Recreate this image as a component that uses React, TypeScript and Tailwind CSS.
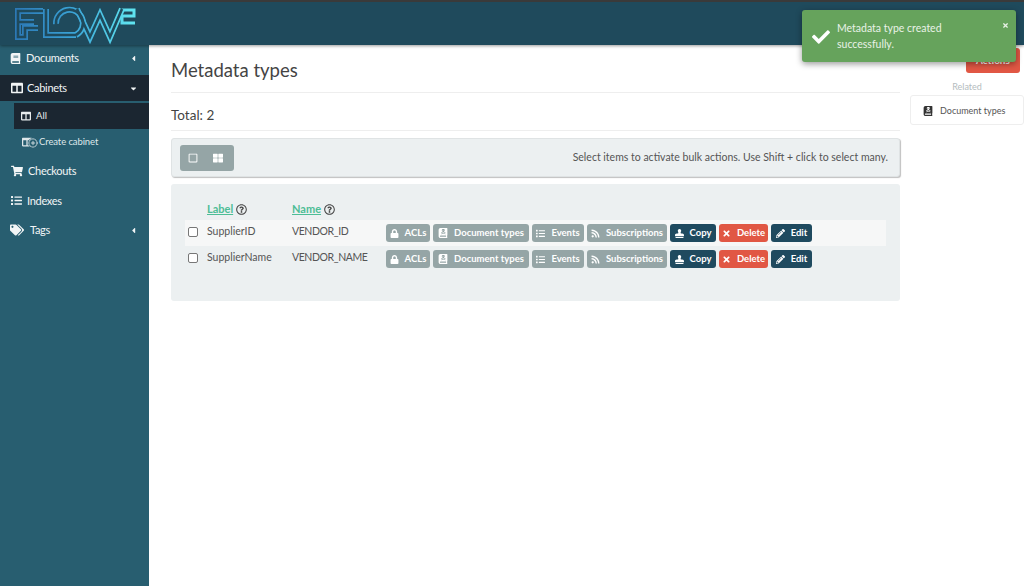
import { CirclePlus } from "lucide-react";
import {
  FaBook,
  FaBookDead,
  FaCaretDown,
  FaCaretLeft,
  FaCheck,
  FaColumns,
  FaList,
  FaLock,
  FaPencilAlt,
  FaRegQuestionCircle,
  FaRegSquare,
  FaRss,
  FaShoppingCart,
  FaStamp,
  FaTags,
  FaThLarge,
  FaTimes,
} from "react-icons/fa";

const Logo = () => {
  const paths = [
    "M43 11H18V22H34M18 22V37H25V28H38",
    "M46 9V35H76",
    "M76 35A13.5 13.5 0 1 0 56 24",
    "M77 9L90 37L100 15L110 37L122 9",
    "M122 10H134V16H122V23H135",
  ];
  return (
    <svg className="ml-[10px]" width="130" height="43" viewBox="10 2 130 43" fill="none">
      <defs>
        <linearGradient id="flow" x1="15" x2="130" y1="0" y2="0" gradientUnits="userSpaceOnUse">
          <stop offset="0" stopColor="#2c78b5" />
          <stop offset="0.5" stopColor="#3aa3d6" />
          <stop offset="1" stopColor="#5fe3f0" />
        </linearGradient>
      </defs>
      {paths.map((d, i) => (
        <path key={i} d={d} stroke="url(#flow)" strokeWidth={i === 4 ? 3 : 6} />
      ))}
      {paths.slice(0, 4).map((d, i) => (
        <path key={i} d={d} stroke="#1f4a5c" strokeWidth="2.6" />
      ))}
    </svg>
  );
};

const navClass = "flex items-center pl-[10px] pr-[11px] text-[11px] tracking-[-0.3px] text-[#f2f5f6]";

const Action = ({ icon, label, color, width }: { icon: React.ReactNode; label: string; color: string; width: string }) => (
  <span className={`flex h-[18px] items-center justify-center gap-[6px] rounded-[3px] text-[9.5px] font-bold text-white ${color} ${width}`}>
    {icon}
    {label}
  </span>
);

const Row = ({ label, name, stripe }: { label: string; name: string; stripe?: boolean }) => (
  <div className={`flex h-[26px] items-center text-[10.5px] text-[#555] ${stripe ? "bg-[#f6f7f7]" : ""}`}>
    <span className="mb-[3px] ml-[3px] h-[10px] w-[10px] rounded-[2px] border border-[#777] bg-white" />
    <span className="mb-[3px] ml-[9px] w-[85px]">{label}</span>
    <span className="mb-[3px] w-[94px] tracking-[-0.4px]">{name}</span>
    <div className="flex gap-[3px]">
      <Action color="bg-[#95a5a6]" width="w-[44px]" icon={<FaLock className="h-[9px] w-[9px]" />} label="ACLs" />
      <Action color="bg-[#95a5a6]" width="w-[96px]" icon={<FaBookDead className="h-[10px] w-[10px]" />} label="Document types" />
      <Action color="bg-[#95a5a6]" width="w-[52px]" icon={<FaList className="h-[9px] w-[9px]" />} label="Events" />
      <Action color="bg-[#95a5a6]" width="w-[80px]" icon={<FaRss className="h-[9px] w-[9px]" />} label="Subscriptions" />
      <Action color="bg-[#1f4a5f]" width="w-[46px]" icon={<FaStamp className="h-[9px] w-[9px]" />} label="Copy" />
      <Action color="bg-[#e15744]" width="w-[49px]" icon={<FaTimes className="h-[9px] w-[9px]" />} label="Delete" />
      <Action color="bg-[#1f4a5f]" width="w-[41px]" icon={<FaPencilAlt className="h-[9px] w-[9px]" />} label="Edit" />
    </div>
  </div>
);

export default function App() {
  return (
    <div className="relative flex h-[586px] w-[1024px] flex-col overflow-hidden bg-white font-['Lato',sans-serif]">
      {/* TOP BAR */}
      <header className="z-10 h-[45px] shrink-0 border-t-2 border-[#3a3a3a] bg-[#1f4a5c] shadow-[0_1px_3px_rgba(0,0,0,0.4)]">
        <Logo />
      </header>

      <div className="flex flex-1">
        {/* SIDEBAR */}
        <aside className="w-[149px] shrink-0 bg-[#285e70]">
          <div className={`${navClass} h-[30px] pb-[3px]`}>
            <FaBook className="mr-[5px] h-[11px] w-[11px]" />
            <span className="flex-1">Documents</span>
            <FaCaretLeft className="h-[9px] w-[9px]" />
          </div>
          <div className={`${navClass} h-[26px] bg-[#1b2631] pl-[11px]`}>
            <FaColumns className="mr-[4px] h-[12px] w-[12px]" />
            <span className="flex-1">Cabinets</span>
            <FaCaretDown className="h-[9px] w-[9px]" />
          </div>
          <div className="ml-[14px] mt-[2px] flex h-[26px] items-center bg-[#1b2631] pl-[7px] text-[9.5px] text-[#e8ecee]">
            <FaColumns className="mr-[5px] h-[10px] w-[10px]" />
            All
          </div>
          <div className="flex h-[26px] items-center pl-[22px] text-[9.5px] tracking-[-0.1px] text-[#dfe7ea]">
            <span className="relative mr-[7px] h-[10px] w-[10px]">
              <FaColumns className="h-[10px] w-[10px]" />
              <CirclePlus className="absolute -right-[6px] top-[1px] h-[10px] w-[10px] rounded-full bg-[#285e70]" strokeWidth={2} />
            </span>
            Create cabinet
          </div>
          <div className={`${navClass} mt-[1.5px] h-[29.5px] pl-[11px]`}>
            <FaShoppingCart className="mr-[5px] h-[12px] w-[12px]" />
            <span>Checkouts</span>
          </div>
          <div className={`${navClass} h-[29.5px] pl-[11px]`}>
            <FaList className="mr-[5px] h-[11px] w-[11px]" />
            <span>Indexes</span>
          </div>
          <div className={`${navClass} h-[29.5px]`}>
            <FaTags className="mr-[6px] h-[14px] w-[14px]" />
            <span className="flex-1">Tags</span>
            <FaCaretLeft className="h-[9px] w-[9px]" />
          </div>
        </aside>

        {/* CONTENT */}
        <main className="ml-[22px] w-[729px] shrink-0 pt-[12px]">
          <h1 className="border-b border-[#eee] pb-[8px] text-[18.5px] leading-[27px] text-[#444]">Metadata types</h1>
          <div className="mt-[14px] border-b border-[#eee] pb-[6px] text-[13.5px] leading-[17px] text-[#444]">Total: 2</div>
          <div className="mt-[7px] flex h-[39px] items-center justify-between rounded-[3px] border border-[#dfe3e4] bg-[#ecf0f1] pl-[8px] pr-[11px] shadow-[1px_1px_1px_rgba(0,0,0,0.25)]">
            <div className="flex h-[26px] w-[54px] items-center gap-[15px] rounded-[3px] bg-[#95a5a6] pl-[8px] text-white">
              <FaRegSquare className="h-[10px] w-[10px]" />
              <FaThLarge className="h-[10px] w-[10px]" />
            </div>
            <span className="text-[10.5px] text-[#555]">Select items to activate bulk actions. Use Shift + click to select many.</span>
          </div>
          <section className="mt-[7px] h-[117px] rounded-[3px] bg-[#ecf0f1] px-[14px] pt-[16px]">
            <div className="mb-[1px] flex h-[19px] items-center text-[11px] font-bold text-[#4dbd96]">
              <span className="ml-[22px] flex w-[85px] items-center gap-[3px]">
                <span className="underline">Label</span>
                <FaRegQuestionCircle className="h-[11px] w-[11px] text-[#444]" />
              </span>
              <span className="flex items-center gap-[3px]">
                <span className="underline">Name</span>
                <FaRegQuestionCircle className="h-[11px] w-[11px] text-[#444]" />
              </span>
            </div>
            <Row stripe label="SupplierID" name="VENDOR_ID" />
            <Row label="SupplierName" name="VENDOR_NAME" />
          </section>
        </main>

        {/* RIGHT COLUMN */}
        <div className="ml-[10px] flex-1 pt-[3px]">
          <div className="ml-[56px] flex h-[25px] w-[54px] items-center justify-center rounded-[3px] bg-[#e15744] text-[10px] font-bold text-white">
            Actions
          </div>
          <div className="mt-[7px] text-center text-[9px] leading-[14px] text-[#b4bcbe]">Related</div>
          <div className="mt-[1px] flex h-[30px] items-center rounded-[3px] border border-[#eee] pl-[12px] pt-[1px] text-[9px] text-[#555]">
            <FaBookDead className="mr-[7px] h-[10px] w-[10px] text-[#333]" />
            Document types
          </div>
        </div>
      </div>

      {/* TOAST */}
      <div className="absolute left-[802px] top-[10px] z-20 h-[52px] w-[214px] rounded-[3px] bg-[#66a35c] text-[#e9f2e7] shadow-[0_2px_6px_rgba(0,0,0,0.4)]">
        <FaCheck className="absolute left-[10px] top-[18px] h-[18px] w-[18px] text-white" />
        <p className="absolute left-[35px] top-[11px] w-[150px] text-[10.5px] leading-[15.5px]">Metadata type created successfully.</p>
        <FaTimes className="absolute right-[7px] top-[12px] h-[7px] w-[7px]" />
      </div>
    </div>
  );
}
